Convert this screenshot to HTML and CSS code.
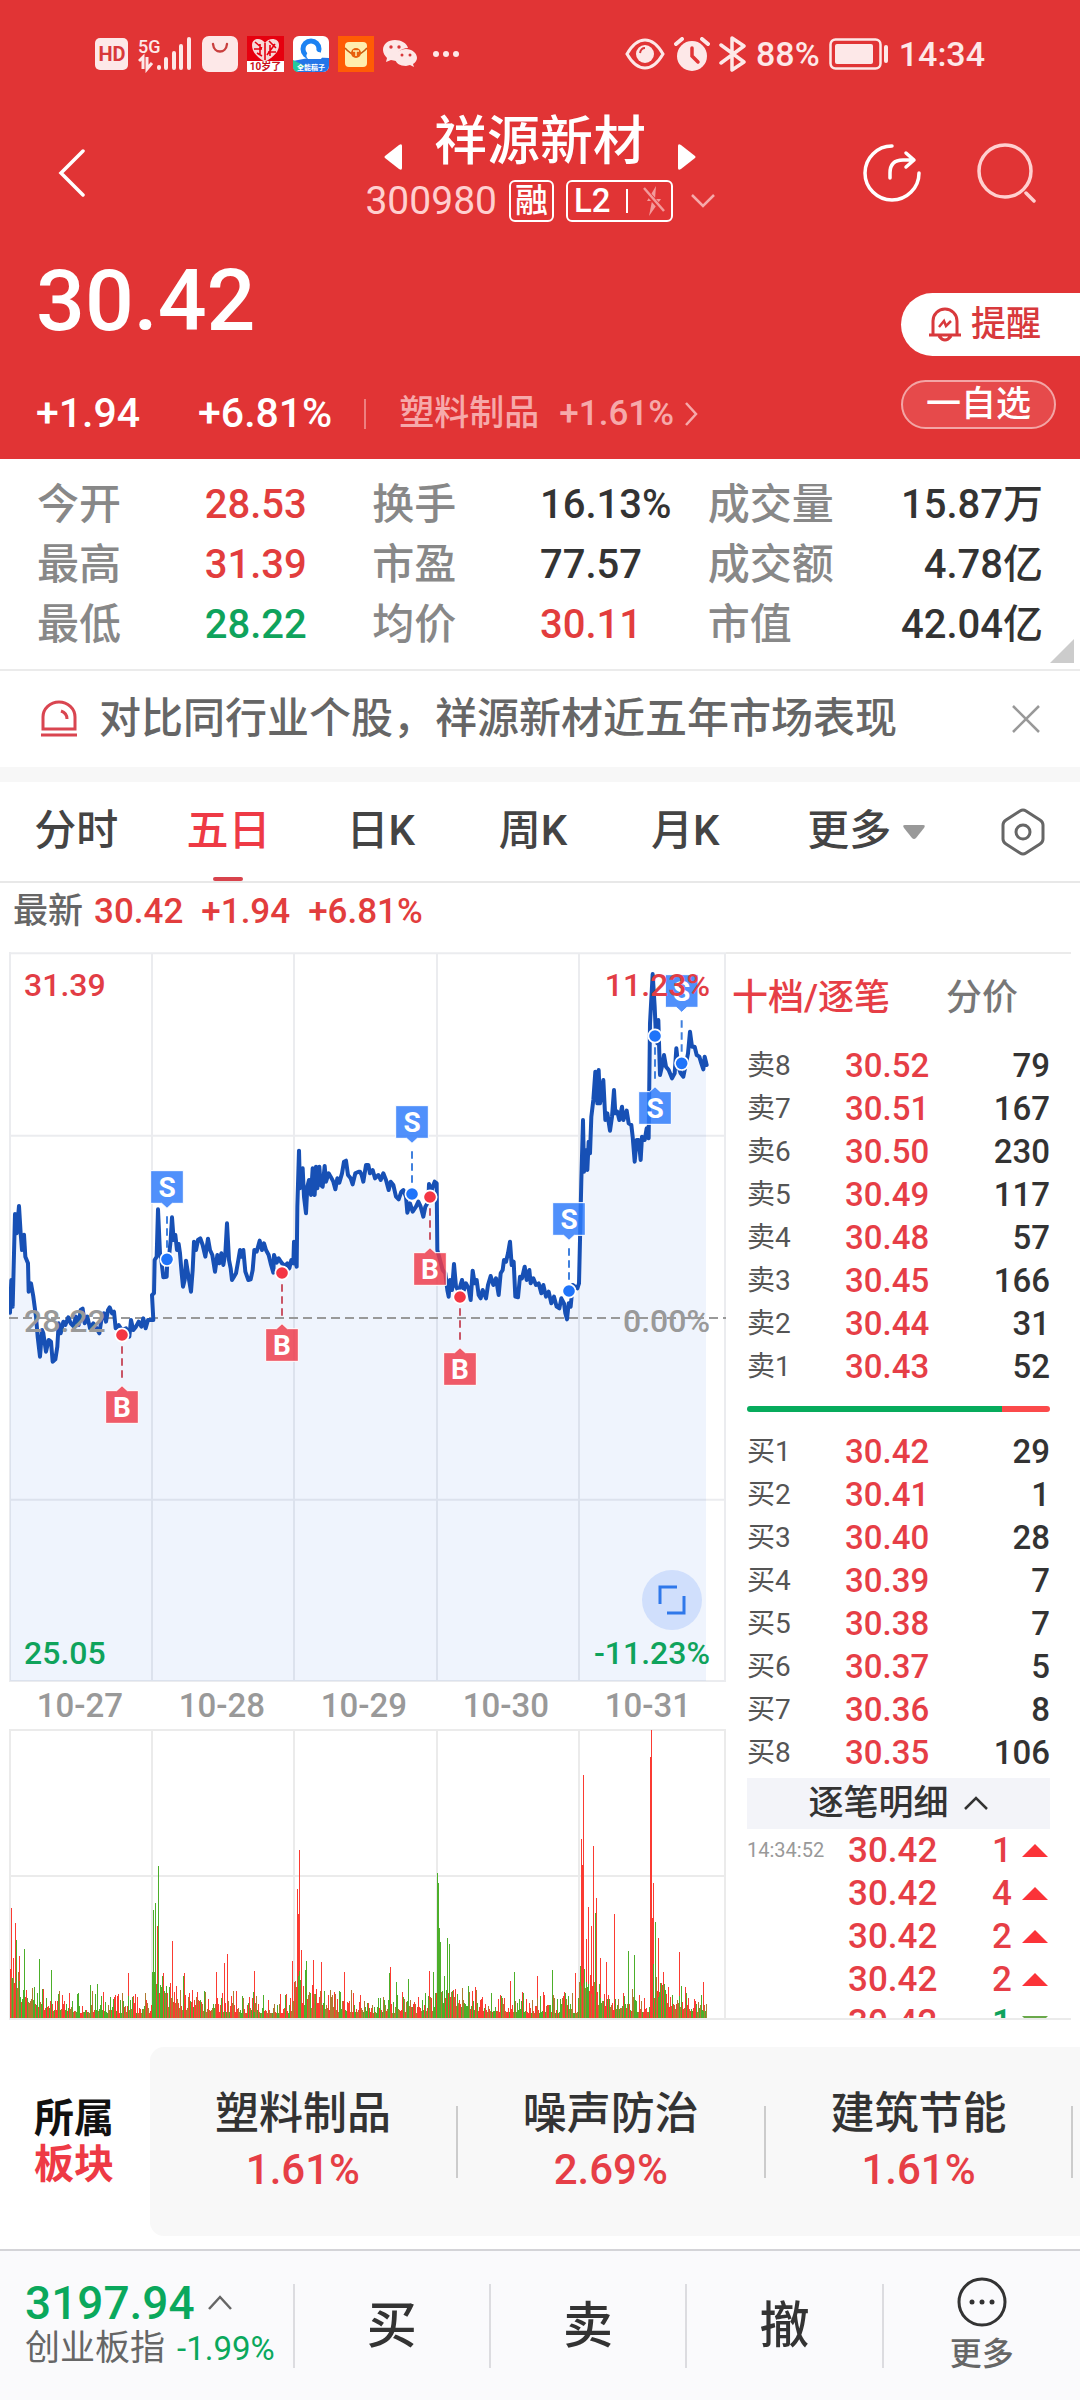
FILE: index.html
```html
<!DOCTYPE html>
<html lang="zh-CN">
<head>
<meta charset="utf-8">
<meta name="viewport" content="width=device-width, initial-scale=1">
<title>祥源新材 300980</title>
<link rel="stylesheet" href="styles.css">
</head>
<body>
<header class="top">
  <div class="status">
    <div class="status-group">
      <svg class="ic-hd" width="34" height="33" viewBox="0 0 34 33"><rect width="33" height="32" rx="5" fill="#fde8e8"/><text x="17" y="23" text-anchor="middle" font-size="20" font-weight="700" fill="#d8383a">HD</text></svg>
      <svg class="ic-signal" width="54" height="38" viewBox="0 0 54 38"><text x="0" y="18" font-size="18" font-weight="500" fill="#fde8e8">5G</text><g stroke="#fde8e8" stroke-width="4" stroke-linecap="round"><path d="M21 32v1M28 24v9M36 18v15M43 11v22M51 4v29"/></g><path d="M1 26l4-4v12M9 22v12l5-6" fill="none" stroke="#fde8e8" stroke-width="3"/></svg>
      <svg width="36" height="36" viewBox="0 0 36 36"><rect width="36" height="36" rx="7" fill="#fde8e8"/><path d="M11 8c1 10 13 10 14 0" fill="none" stroke="#c9403f" stroke-width="2.4" stroke-linecap="round"/></svg>
      <svg width="37" height="36" viewBox="0 0 37 36"><path fill="#e6000f" d="M0 0h37v25H0z"/><path fill="#fff" d="M0 25h37v11H0z"/><path d="M18 26C8 20 5 15 5 9c0-7 9-8 13-2 4-6 14-5 14 2 0 6-4 11-14 17z" fill="#f6d9d8"/><path d="M8 6l7 6M22 5l7 7M7 13h8M13 8v10M23 9v11M28 8l-8 11M18 7v17M10 17l5 3M21 16h8" stroke="#e6000f" stroke-width="1.6"/><text x="18.500" y="34" font-size="10" font-weight="700" text-anchor="middle" fill="#c8101a">10岁了</text></svg>
      <svg width="36" height="36" viewBox="0 0 36 36"><rect width="36" height="36" rx="6" fill="#fff"/><path d="M0 25q18-5 36-3v8a6 6 0 0 1-6 6H6a6 6 0 0 1-6-6z" fill="#2476e8"/><path d="M0 24l12 6-8 6a6 6 0 0 1-4-6z" fill="#25c99d"/><circle cx="18" cy="13" r="8" fill="none" stroke="#1c82f2" stroke-width="5"/><path d="M15 23a4 4 0 0 1 1-7 5 5 0 0 1 9 0 4 4 0 0 1 3 7z" fill="#fff"/><text x="18" y="34" font-size="7" font-weight="700" text-anchor="middle" fill="#fff">全能稿子</text></svg>
      <svg width="36" height="36" viewBox="0 0 36 36"><path fill="#ff5c05" d="M0 0h36v36H0z"/><rect x="7" y="6" width="22" height="25" rx="4" fill="#ffedae"/><path d="M7 12q11 13 22 0" fill="none" stroke="#c75a12" stroke-width="1.600"/><circle cx="18" cy="17" r="5" fill="#e8600c"/><path d="M15 15h6M18 15v5" stroke="#ffedae" stroke-width="1.500"/></svg>
      <svg width="35" height="30" viewBox="0 0 35 30"><path d="M12 1C5 1 0 5 0 11c0 3 2 6 4 8l-1 4 5-2 5 1h1c-2-8 4-13 11-13C24 4 18 1 12 1z" fill="#fde8e8"/><path d="M23 10c-6 0-11 4-11 9s5 8 11 8l4-1 4 2-1-3c2-1 4-4 4-6 0-5-5-9-11-9z" fill="#fde8e8"/><g fill="#d8383a"><circle cx="8" cy="8" r="1.700"/><circle cx="16" cy="8" r="1.700"/><circle cx="19" cy="16" r="1.500"/><circle cx="27" cy="16" r="1.500"/></g></svg>
      <svg class="ic-dots" width="26" height="6" viewBox="0 0 26 6" fill="#fde8e8"><circle cx="3" cy="3" r="3"/><circle cx="13" cy="3" r="3"/><circle cx="23" cy="3" r="3"/></svg>
    </div>
    <div class="status-group status-right">
      <svg width="40" height="32" viewBox="0 0 40 32"><path d="M2 16Q10 2 20 2t18 14Q30 30 20 30T2 16z" fill="none" stroke="#fde8e8" stroke-width="3"/><circle cx="20" cy="16" r="9" fill="#fde8e8"/><path d="M15 15q1-5 5-5" fill="none" stroke="#d8383a" stroke-width="2"/></svg>
      <svg width="36" height="34" viewBox="0 0 36 34"><circle cx="18" cy="19" r="15" fill="#fde8e8"/><path d="M2 7l6-5M34 7l-6-5" stroke="#fde8e8" stroke-width="4" stroke-linecap="round"/><path d="M18 11v8l6 6" fill="none" stroke="#e13435" stroke-width="3.500" stroke-linecap="round"/></svg>
      <svg width="28" height="36" viewBox="0 0 28 36"><path d="M2 9l23 17-12 8V2l12 8L2 27" fill="none" stroke="#fde8e8" stroke-width="3.500" stroke-linejoin="round" stroke-linecap="round"/></svg>
      <span>88%</span>
      <svg width="61" height="32" viewBox="0 0 61 32"><rect x="1.500" y="1.500" width="50" height="29" rx="5" fill="none" stroke="#fde8e8" stroke-width="2.500"/><rect x="6" y="6" width="38" height="20" rx="2" fill="#fde8e8"/><path d="M57 9v14" stroke="#fde8e8" stroke-width="4" stroke-linecap="round"/></svg>
      <span class="clock">14:34</span>
    </div>
  </div>

  <nav class="nav">
    <button class="icon-btn back" aria-label="返回"><svg width="28" height="48" viewBox="0 0 28 48"><path d="M25 2L3 24l22 22" fill="none" stroke="#fff" stroke-width="3.500" stroke-linecap="round"/></svg></button>
    <div class="nav-mid">
      <div class="title-row">
        <button class="icon-btn" aria-label="上一只"><svg width="18" height="26" viewBox="0 0 18 26"><path d="M18 2v22q0 3-3 1L1 14q-1-1 0-2L15 1q3-2 3 1z" fill="#fff"/></svg></button>
        <h1>祥源新材</h1>
        <button class="icon-btn" aria-label="下一只"><svg width="18" height="26" viewBox="0 0 18 26"><path d="M0 2v22q0 3 3 1l14-11q1-1 0-2L3 1Q0-1 0 2z" fill="#fff"/></svg></button>
      </div>
      <div class="code-row">
        <span class="code">300980</span>
        <span class="tag">融</span>
        <span class="tag tag-l2">L2<i></i><svg width="22" height="30" viewBox="0 0 22 30"><path d="M13 0L4 15h5L6 30l12-17h-6z" fill="#f39a9b"/><path d="M1 3l20 23" stroke="#e13435" stroke-width="5"/><path d="M1 2l20 23" stroke="#f39a9b" stroke-width="2.500"/></svg></span>
        <svg class="code-more" width="24" height="14" viewBox="0 0 24 14"><path d="M1 1l11 11L23 1" fill="none" stroke="#f6a9aa" stroke-width="2.500"/></svg>
      </div>
    </div>
    <div class="nav-actions">
      <button class="icon-btn" aria-label="分享"><svg width="60" height="60" viewBox="0 0 60 60" fill="none" stroke="#fff" stroke-width="3.500" stroke-linecap="round" stroke-linejoin="round"><path d="M30 3a27 27 0 1 0 27 27"/><path d="M28 35v-5q0-13 13-13h10M44 10l8 7-8 7"/></svg></button>
      <button class="icon-btn" aria-label="搜索"><svg width="60" height="60" viewBox="0 0 60 60" fill="none" stroke="#ffcfcf" stroke-width="3.500" stroke-linecap="round"><circle cx="29" cy="28" r="26"/><path d="M50 50l8 8"/></svg></button>
    </div>
  </nav>

  <section class="quote">
    <div class="quote-main">
      <div class="price">30.42</div>
      <div class="change">
        <span class="chg-abs">+1.94</span><span>+6.81%</span><i></i>
        <a href="#industry" class="industry"><span>塑料制品</span><span>+1.61%</span><svg width="14" height="24" viewBox="0 0 14 24"><path d="M2 1l10 11L2 23" fill="none" stroke="#f6a9aa" stroke-width="2.500"/></svg></a>
      </div>
    </div>
    <div class="quote-side">
      <button class="alert"><svg width="34" height="35" viewBox="0 0 34 35" fill="none" stroke="#d8393c" stroke-width="3"><path d="M5 27V14a12 12 0 0 1 24 0v13M1 28h32M11 29q6 8 12 0"/><path d="M11 20l5-6 2 5 5-5" stroke-width="2.500"/></svg>提醒</button>
      <button class="watch">一自选</button>
    </div>
  </section>
</header>

<main>
  <section class="stats">
    <dl>
      <dt>今开</dt><dd class="up">28.53</dd><dt>换手</dt><dd>16.13%</dd><dt>成交量</dt><dd>15.87万</dd>
      <dt>最高</dt><dd class="up">31.39</dd><dt>市盈</dt><dd>77.57</dd><dt>成交额</dt><dd>4.78亿</dd>
      <dt>最低</dt><dd class="down">28.22</dd><dt>均价</dt><dd class="up">30.11</dd><dt>市值</dt><dd>42.04亿</dd>
    </dl>
    <svg class="corner" width="24" height="24" viewBox="0 0 24 24"><path d="M24 0v24H0z" fill="#ccc"/></svg>
  </section>

  <section class="notice">
    <svg width="36" height="38" viewBox="0 0 36 38" fill="none" stroke="#d94550" stroke-width="3"><path d="M2 29V17a16 15 0 0 1 32 0v12z"/><path d="M20 11q6 2 6 8M0 35h36"/></svg>
    <p>对比同行业个股，祥源新材近五年市场表现</p>
    <button class="icon-btn" aria-label="关闭"><svg width="28" height="28" viewBox="0 0 28 28"><path d="M1 1l26 26M27 1L1 27" stroke="#999" stroke-width="2.500"/></svg></button>
  </section>

  <div class="tabs">
    <button>分时</button><button class="active">五日</button><button>日K</button><button>周K</button><button>月K</button>
    <button class="tab-more">更多<svg width="22" height="14" viewBox="0 0 22 14"><path d="M2 0h18q3 0 1 3l-8 10q-2 2-4 0L1 3Q-1 0 2 0z" fill="#999"/></svg></button>
    <button class="icon-btn tab-set" aria-label="设置"><svg width="44" height="48" viewBox="0 0 44 48" fill="none" stroke="#666" stroke-width="3"><path d="M19 3q3-2 6 0l14 9q3 2 3 5v14q0 3-3 5l-14 9q-3 2-6 0L5 36q-3-2-3-5V17q0-3 3-5z"/><circle cx="22" cy="24" r="7"/></svg></button>
  </div>

  <p class="latest"><b>最新</b><span>30.42</span><span>+1.94</span><span>+6.81%</span></p>

  <section class="market">
    <div class="charts">
      <svg class="price-chart" viewBox="27 36 2151 2190" role="img" aria-label="五日分时走势">
        <path class="area" id="area"/>
        <path class="grid" d="M27 40H2178M30 587H2175M30 1679H2175M27 2223H2178M30 36V2223M456 40V2223M882 40V2223M1311 40V2223M1737 40V2223M2175 40V2223"/>
        <path class="base" d="M27 1134H2178"/>
        <path class="line" id="line"/>
        <g id="marks"></g>
        <g class="axis">
          <text class="t-up" x="72" y="168">31.39</text>
          <text class="t-up" x="2130" y="168" text-anchor="end">11.23%</text>
          <text class="t-mid" x="72" y="1176">28.22</text>
          <text class="t-mid" x="2130" y="1176" text-anchor="end">0.00%</text>
          <text class="t-down" x="72" y="2172">25.05</text>
          <text class="t-down" x="2130" y="2172" text-anchor="end">-11.23%</text>
        </g>
        <circle cx="2016" cy="1980" r="90" fill="#d0dffc"/>
        <path d="M1980 1992v-51h51M2052 1968v51h-51" fill="none" stroke="#2f78ea" stroke-width="9"/>
      </svg>
      <div class="dates"><span>10-27</span><span>10-28</span><span>10-29</span><span>10-30</span><span>10-31</span></div>
      <svg class="vol-chart" viewBox="0 0 717 291" role="img" aria-label="成交量">
        <path class="vgrid" d="M0 1H717M1 147H716M0 290H717M1 0V290M143 0V290M285 0V290M428 0V290M570 0V290M716 0V290"/>
        <path id="vol-up" stroke="#fb3b32"/><path id="vol-mix" stroke="#b07a30"/><path id="vol-down" stroke="#4caf2a"/>
      </svg>
    </div>

    <aside class="book">
      <div class="book-tabs"><button class="active">十档/逐笔</button><button>分价</button></div>
      <table>
        <tr><th>卖8</th><td>30.52</td><td>79</td></tr>
        <tr><th>卖7</th><td>30.51</td><td>167</td></tr>
        <tr><th>卖6</th><td>30.50</td><td>230</td></tr>
        <tr><th>卖5</th><td>30.49</td><td>117</td></tr>
        <tr><th>卖4</th><td>30.48</td><td>57</td></tr>
        <tr><th>卖3</th><td>30.45</td><td>166</td></tr>
        <tr><th>卖2</th><td>30.44</td><td>31</td></tr>
        <tr><th>卖1</th><td>30.43</td><td>52</td></tr>
      </table>
      <div class="ratio"><i></i></div>
      <table>
        <tr><th>买1</th><td>30.42</td><td>29</td></tr>
        <tr><th>买2</th><td>30.41</td><td>1</td></tr>
        <tr><th>买3</th><td>30.40</td><td>28</td></tr>
        <tr><th>买4</th><td>30.39</td><td>7</td></tr>
        <tr><th>买5</th><td>30.38</td><td>7</td></tr>
        <tr><th>买6</th><td>30.37</td><td>5</td></tr>
        <tr><th>买7</th><td>30.36</td><td>8</td></tr>
        <tr><th>买8</th><td>30.35</td><td>106</td></tr>
      </table>
      <button class="detail">逐笔明细<svg width="26" height="15" viewBox="0 0 26 15"><path d="M2 13L13 2l11 11" fill="none" stroke="#333" stroke-width="2.500"/></svg></button>
      <div class="ticks">
        <table>
          <tr><th>14:34:52</th><td>30.42</td><td>1</td><td><i class="tri"></i></td></tr>
          <tr><th></th><td>30.42</td><td>4</td><td><i class="tri"></i></td></tr>
          <tr><th></th><td>30.42</td><td>2</td><td><i class="tri"></i></td></tr>
          <tr><th></th><td>30.42</td><td>2</td><td><i class="tri"></i></td></tr>
          <tr><th></th><td>30.42</td><td class="down">1</td><td><i class="tri tri-down"></i></td></tr>
        </table>
      </div>
    </aside>
  </section>

  <section class="sectors" id="industry">
    <h2>所属<em>板块</em></h2>
    <div class="sector-list">
      <a href="#s1"><span>塑料制品</span><b>1.61%</b></a>
      <a href="#s2"><span>噪声防治</span><b>2.69%</b></a>
      <a href="#s3"><span>建筑节能</span><b>1.61%</b></a>
    </div>
  </section>
</main>

<footer class="bottom">
  <div class="index">
    <div class="index-val">3197.94<svg width="24" height="15" viewBox="0 0 24 15"><path d="M1 14L12 2l11 12" fill="none" stroke="#666" stroke-width="2.500"/></svg></div>
    <div class="index-name">创业板指<span>-1.99%</span></div>
  </div>
  <button>买</button><button>卖</button><button>撤</button>
  <button class="more"><svg width="50" height="50" viewBox="0 0 50 50"><circle cx="25" cy="25" r="23" fill="none" stroke="#333" stroke-width="3"/><g fill="#333"><circle cx="15" cy="25" r="2.500"/><circle cx="25" cy="25" r="2.500"/><circle cx="35" cy="25" r="2.500"/></g></svg>更多</button>
</footer>
<script src="chart.js"></script>
</body>
</html>
```
FILE: styles.css
```css
* { box-sizing: border-box; }
body {
  margin: 0;
  background: #fff;
  color: #333;
  font-family: Roboto, "Noto Sans CJK SC", sans-serif;
  font-weight: 500;
  line-height: 1.2;
}
button {
  border: 0;
  margin: 0;
  padding: 0;
  background: none;
  color: inherit;
  font: inherit;
}
a { color: inherit; text-decoration: none; }
h1, h2, p, dl, dd { margin: 0; }
svg { display: block; flex: none; }
i { display: block; }
.up { color: #e23d3d; }
.down { color: #0fa35c; }
.icon-btn { display: flex; align-items: center; }

.top { background: #e13435; color: #fff; }
.status {
  display: flex;
  justify-content: space-between;
  padding: 34px 95px 0 95px;
  height: 74px;
  color: #fde8e8;
  font-size: 34px;
}
.status-group { display: flex; align-items: center; gap: 9px; }
.status-right { gap: 9px; }
.ic-signal { margin-right: 1px; }
.ic-dots { margin-left: 6px; }

.nav {
  display: grid;
  grid-template-columns: 1fr auto 1fr;
  align-items: center;
  padding: 40px 44px 0;
}
.back { padding-left: 14px; }
.nav-mid { padding-bottom: 10px; }
.title-row { display: flex; align-items: flex-end; justify-content: center; gap: 32px; height: 56px; }
h1 { font-size: 53px; line-height: 56px; font-weight: 500; }
.code-row { display: flex; align-items: center; justify-content: center; gap: 12px; margin-top: 10px; height: 42px; }
.code { font-size: 39px; font-weight: 400; color: #ffcfcf; }
.tag {
  display: flex;
  align-items: center;
  height: 42px;
  padding: 0 4px;
  border: 2px solid #fff;
  border-radius: 6px;
  font-size: 33px;
  line-height: 38px;
}
.tag-l2 { padding: 0 6px; gap: 15px; }
.tag-l2 i { width: 2px; height: 24px; background: #fff; }
.code-more { margin-left: 6px; }
.nav-actions { display: flex; justify-content: flex-end; gap: 54px; }

.quote { display: flex; justify-content: space-between; }
.quote-main { padding: 26px 0 21px 36px; }
.price { font-size: 86px; line-height: 86px; }
.change { display: flex; align-items: center; margin-top: 46px; height: 48px; font-size: 41px; }
.chg-abs { margin-right: 58px; }
.change > i { width: 2px; height: 30px; margin: 0 33px 0 32px; background: #ee7f80; }
.industry { display: flex; align-items: center; gap: 20px; font-size: 35px; color: #f6a9aa; }
.industry svg { margin-left: -10px; }
.quote-side { display: flex; flex-direction: column; gap: 24px; width: 179px; padding-top: 61px; }
.alert {
  display: flex;
  align-items: center;
  gap: 9px;
  height: 63px;
  padding-left: 27px;
  border-radius: 32px 0 0 32px;
  background: #fff;
  color: #d8393c;
  font-size: 35px;
}
.watch {
  width: 155px;
  height: 49px;
  border: 2px solid #f3a5a5;
  border-radius: 25px;
  background: #e64a4b;
  font-size: 35px;
  line-height: 45px;
}

.stats { position: relative; padding: 16px 37px 14px; border-bottom: 2px solid #ebebeb; }
.stats dl { display: grid; grid-template-columns: repeat(6, 1fr); font-size: 42px; line-height: 60px; }
.stats dt { color: #888; white-space: nowrap; }
.stats dd { font-size: 40px; white-space: nowrap; }
.stats dd:nth-of-type(3n) { text-align: right; }
.corner { position: absolute; right: 6px; bottom: 6px; }

.notice {
  display: flex;
  align-items: center;
  height: 96px;
  padding: 0 40px 0 41px;
  font-size: 42px;
  color: #666;
}
.notice p { flex: 1; margin-left: 22px; white-space: nowrap; }

.tabs {
  display: flex;
  height: 116px;
  border-top: 15px solid #f7f7f7;
  border-bottom: 2px solid #e8e8e8;
  font-size: 42px;
  color: #444;
}
.tabs button { flex: 0 0 14.1%; }
.tabs .active { position: relative; color: #ee3a45; }
.tabs .active::after {
  content: "";
  position: absolute;
  left: 50%;
  bottom: 0;
  width: 30px;
  height: 4px;
  margin-left: -15px;
  border-radius: 2px;
  background: #d8434c;
}
.tabs .tab-more { display: flex; flex: 1; align-items: center; gap: 12px; padding-left: 46px; }
.tabs .tab-set { flex: 0 0 auto; padding-right: 35px; }

.latest {
  display: flex;
  align-items: center;
  gap: 18px;
  height: 69px;
  padding: 0 0 11px 13px;
  font-size: 35px;
  color: #e23d3d;
}
.latest b { margin-right: -7px; font-weight: 500; color: #666; }

.market { display: grid; grid-template-columns: 717fr 354fr; padding-left: 9px; }
.charts svg { width: 100%; height: auto; }
.area { fill: #eff4fd; }
.grid { fill: none; stroke: #3c4664; stroke-opacity: .1; stroke-width: 6; }
.base { stroke: #999; stroke-width: 6; stroke-dasharray: 27 15; }
.line { fill: none; stroke: #1750b5; stroke-width: 12; stroke-linejoin: round; stroke-linecap: round; }
.axis { font-size: 96px; }
.t-up { fill: #e23d45; }
.t-mid { fill: #999; }
.t-down { fill: #0fa35c; }
.mark-letter { font-size: 84px; font-weight: 700; fill: #fff; text-anchor: middle; }
.dates { display: flex; height: 47px; line-height: 47px; font-size: 33px; color: #999; }
.dates span { flex: 0 0 19.8%; text-align: center; }
.vgrid { stroke: #ebebeb; stroke-width: 2; }
.vol-chart { shape-rendering: crispEdges; }

.book { display: flex; flex-direction: column; padding-right: 30px; padding-left: 21px; }
.book-tabs {
  display: flex;
  gap: 56px;
  height: 92px;
  margin: 0 -21px;
  padding-left: 6px;
  border-top: 2px solid #ebebeb;
  font-size: 36px;
  color: #777;
}
.book-tabs .active { color: #e63e46; }
.book table { width: 100%; border-collapse: collapse; table-layout: fixed; }
.book th, .book td { height: 43px; padding: 0; font-weight: 500; text-align: left; line-height: 43px; white-space: nowrap; }
.book th { width: 98px; font-size: 28px; font-weight: 400; color: #555; }
.book td { font-size: 33px; color: #333; }
.book td:nth-child(2) { color: #e63e46; width: 110px; }
.book td:nth-child(3) { text-align: right; }
.ratio { display: flex; align-items: center; height: 42px; }
.ratio i { flex: 1; height: 6px; border-radius: 3px; background: linear-gradient(to right, #06ab5c 84%, #fb4a4b 84%); }
.detail {
  display: flex;
  align-items: center;
  justify-content: center;
  gap: 14px;
  margin-top: 4px;
  height: 51px;
  flex: none;
  background: #f3f4f9;
  font-size: 35px;
}
.ticks { flex: 1 1 0px; min-height: 0; overflow: hidden; border-bottom: 2px solid #ebebeb; margin: 0 -21px; padding: 0 21px; }
.book .ticks th { width: 101px; font-size: 20px; color: #999; }
.book .ticks td { font-size: 35px; color: #e63e46; }
.book .ticks td:last-child { width: 38px; }
.book .ticks .down { color: #0fa35c; }
.tri { width: 26px; height: 13px; margin-left: 10px; background: #fb3338; clip-path: polygon(50% 0, 100% 100%, 0 100%); }
.tri-down { background: #6aa94a; clip-path: polygon(0 0, 100% 0, 50% 100%); }

.sectors { display: flex; align-items: stretch; padding: 27px 0 13px; }
h2 { display: flex; flex-direction: column; justify-content: center; width: 150px; padding-left: 34px; font-size: 40px; line-height: 46px; font-weight: 700; color: #111; }
h2 em { font-style: normal; color: #ee3a45; }
.sector-list { display: flex; flex: 1; align-items: center; height: 189px; border-radius: 14px 0 0 14px; background: #f8f8f8; overflow: hidden; }
.sector-list a { flex: 0 0 33.1%; border-right: 2px solid #ccc; text-align: center; height: 72px; display: flex; flex-direction: column; justify-content: center; }
.sector-list span { font-size: 44px; line-height: 56px; }
.sector-list b { font-size: 42px; line-height: 56px; font-weight: 500; color: #e63e46; }

.bottom {
  display: grid;
  grid-template-columns: 3fr 2fr 2fr 2fr 2fr;
  align-items: center;
  height: 151px;
  border-top: 2px solid #d4d4d8;
  background: #fafafc;
}
.bottom > * { height: 84px; border-right: 2px solid #dcdce0; }
.bottom button { font-size: 50px; }
.index { display: flex; flex-direction: column; justify-content: center; padding-left: 25px; white-space: nowrap; }
.index-val { display: flex; align-items: center; gap: 13px; font-size: 46px; line-height: 46px; color: #0aa85c; }
.index-name { font-size: 35px; line-height: 46px; color: #666; font-weight: 400; }
.index-name span { margin-left: 12px; font-size: 33px; color: #0aa85c; }
.bottom .more { display: flex; flex-direction: column; align-items: center; justify-content: center; gap: 8px; height: 120px; border: 0; font-size: 32px; color: #666; }
```
FILE: chart.js
```
// Price samples as "x,y" pairs in chart units, split at the middle of the third day.
const early = "30,1118 34,1020 38,1100 45,822 50,880 57,798 62,880 66,930 72,884 76,950 84,970 86,1055 93,1030 100,1070 108,1130 113,1190 120,1250 126,1170 130,1180 138,1235 146,1200 153,1205 158,1265 166,1258 172,1220 176,1150 182,1180 190,1145 196,1155 205,1132 212,1150 220,1158 228,1130 236,1155 242,1110 248,1106 254,1150 262,1130 270,1165 280,1150 290,1165 298,1180 304,1140 312,1120 318,1145 324,1110 329,1102 336,1120 342,1115 347,1165 356,1155 366,1170 378,1165 388,1190 393,1140 400,1170 408,1160 416,1145 424,1160 430,1135 437,1165 444,1140 460,1140 456,1065 462,1060 464,960 470,950 474,808 480,940 484,960 490,1012 500,1010 502,960 508,940 512,900 516,832 521,900 526,885 531,930 536,912 540,940 545,1000 549,1040 554,1020 558,962 564,1000 573,1055 578,990 582,905 588,930 594,900 601,895 608,915 616,950 624,896 630,930 637,945 645,995 652,945 658,970 664,940 670,975 676,940 681,850 687,960 692,985 696,1020 702,1010 708,1000 715,960 720,930 725,950 730,930 736,995 745,1020 752,1018 758,990 763,930 770,935 779,902 786,930 792,910 798,930 806,945 812,970 820,998 822,945 830,968 836,955 846,970 855,978 862,970 868,985 874,960 880,970 882,905 886,965 890,980 892,800 897,632 900,745 908,685 912,770 918,820 922,740 927,720 933,765 938,685 944,765 948,680 952,745 958,680 962,735 968,740 974,678 978,725 986,700 992,710 1000,725 1006,748 1012,715 1018,728 1026,700 1032,665 1038,662 1044,705 1052,715 1058,733 1066,700 1076,695";
const late = "0,695 5,705 10,725 18,675 25,675 30,700 38,690 45,715 55,705 62,720 70,700 78,720 86,750 92,725 100,735 108,770 116,778 124,755 130,750 138,770 142,818 150,790 158,815 168,800 175,785 182,800 190,830 196,800 205,785 207,732 215,750 224,725 230,730 232,930 240,960 248,990 256,1000 262,1050 266,1070 270,1020 276,1050 282,972 288,1040 296,1055 306,1020 312,1050 318,1030 326,1045 332,1080 338,992 344,1030 350,1020 356,1065 362,1075 368,1050 378,1075 384,1035 392,1008 400,1035 408,1015 416,1065 422,1000 428,990 432,960 438,965 444,940 450,905 455,975 461,965 466,1070 474,1072 480,1010 486,1015 494,980 500,1020 508,990 512,1030 520,1015 528,1035 536,1030 544,1060 550,1035 558,1070 566,1055 574,1090 582,1070 590,1100 598,1105 604,1075 612,1090 616,1120 621,1138 626,1090 632,1100 638,1035 645,1040 652,1045 657,1030 660,900 664,720 669,540 672,695 676,630 682,690 686,605 690,640 694,530 700,480 706,395 712,490 716,390 720,490 724,470 730,420 736,540 742,520 750,572 756,530 762,450 766,520 772,515 778,540 786,500 790,540 800,512 806,550 814,555 818,590 824,665 830,600 836,600 842,660 846,590 854,600 860,565 866,595 870,250 878,102 884,200 888,290 892,310 895,240 900,405 908,370 912,345 918,380 926,390 936,415 944,400 949,325 955,380 962,400 970,410 978,370 984,340 990,275 996,320 1004,320 1010,345 1018,350 1024,370 1030,388 1034,350 1040,375";
const parse = (text, dx) => text.split(" ").map(p => {
  const [x, y] = p.split(",").map(Number);
  return [x + dx, y];
});
const points = parse(early, 0).concat(parse(late, 1080));
const line = "M" + points.map(p => p.join(" ")).join("L");
document.getElementById("line").setAttribute("d", line);
document.getElementById("area").setAttribute("d", line + "L2118 375V2223H30Z");

// Trades: letter, x, y of the dot, y of the flag's centre.
const trades = [
  ["B", 366, 1185, 1401], ["S", 501, 958, 741], ["B", 846, 999, 1215],
  ["S", 1236, 762, 546], ["B", 1290, 771, 987], ["B", 1380, 1071, 1287],
  ["S", 1707, 1053, 837], ["S", 1965, 288, 504], ["S", 2045, 370, 153]
];
document.getElementById("marks").innerHTML = trades.map(([letter, x, dot, flag]) => {
  const buy = letter === "B";
  const dir = flag > dot ? -1 : 1;
  const edge = flag + dir * 49;
  const tip = flag + dir * 64;
  return `<path d="M${x} ${tip + dir * 24}V${dot}" stroke="${buy ? "#c95566" : "#4080dd"}" stroke-width="6" stroke-dasharray="22 14"/>
  <path d="M${x - 49} ${flag - dir * 49}h98V${edge}h-33L${x} ${tip}l-16 ${-dir * 15}H${x - 49}Z" fill="${buy ? "#ee3c4b" : "#2e7bfa"}" fill-opacity=".84" stroke="#fff" stroke-width="3"/>
  <circle cx="${x}" cy="${dot}" r="20" fill="${buy ? "#f43643" : "#1f74fa"}" stroke="#fff" stroke-width="5"/>
  <text class="mark-letter" x="${x}" y="${flag + 30}">${letter}</text>`;
}).join("");

// Volume bars: notable minutes as [x, height, rising], the rest is low turnover.
const peaks = [[2,110,1],[4,60,1],[6,95,1],[7,78,0],[15,69,0],[10,62,1],[30,59,0],[42,48,0],[81,33,0],[88,34,0],[119,45,1],[144,108,0],[146,115,0],[149,152,0],[148,92,1],[163,77,1],[175,45,1],[174,42,0],[207,46,1],[218,64,1],[215,55,1],[245,47,1],[283,57,1],[288,129,1],[290,168,1],[289,104,1],[292,68,1],[297,57,0],[304,58,1],[312,56,1],[335,46,1],[380,45,0],[381,51,1],[387,36,0],[399,39,0],[420,47,1],[424,46,0],[428,145,0],[429,135,0],[430,90,0],[431,76,0],[438,80,0],[440,74,0],[501,37,1],[505,46,0],[528,42,1],[543,48,0],[566,45,1],[572,179,1],[574,243,1],[573,153,1],[577,79,1],[579,111,1],[582,92,1],[584,172,1],[587,120,1],[586,105,0],[591,60,1],[597,56,1],[605,104,1],[619,67,0],[625,63,0],[641,261,1],[642,288,1],[643,100,1],[644,135,1],[646,96,0],[649,80,1],[654,46,1],[670,66,1],[694,36,1]];
const opens = [1, 143, 285, 428, 570, 641];
let seed = 7;
const rand = () => (seed = (seed * 16807) % 2147483647) / 2147483647;
const bars = { up: "", mix: "", down: "" };
const bar = (kind, x, h) => { bars[kind] += `M${x + .5} 289v${-Math.round(h)}`; };
for (let x = 1; x < 698; x++) {
  const open = opens.filter(o => o <= x).pop();
  const burst = Math.exp(-(x - open) / 18) * 42;
  const h = 5 + Math.pow(rand(), 2.4) * 22 + burst * (.3 + rand() * .8);
  const pick = rand();
  const kind = pick < .38 ? "up" : pick < .68 ? "mix" : "down";
  bar(kind, x, h);
}
for (const [x, h, rising] of peaks) bar(rising ? "up" : "down", x, h);
for (const kind in bars) document.getElementById("vol-" + kind).setAttribute("d", bars[kind]);
```
